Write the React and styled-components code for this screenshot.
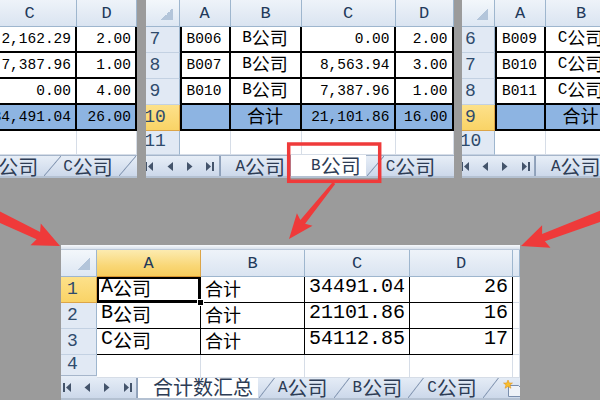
import React from "react";
import styled, { createGlobalStyle } from "styled-components";

const GlobalStyle = createGlobalStyle`
  html, body { margin: 0; padding: 0; background: #9b9b9b; }
  body { width: 600px; height: 400px; overflow: hidden; font-family: "Liberation Mono", "Noto Sans CJK SC", monospace; }
  #root { width: 600px; height: 400px; }
`;

const Stage = styled.div`
  position: relative;
  width: 600px;
  height: 400px;
  background: #9b9b9b;
  display: flex;
  flex-direction: column;
  overflow: hidden;
`;

const TopRow = styled.div`
  display: flex;
  justify-content: space-between;
  height: 178px;
  flex: none;
`;

const Panel = styled.div`
  width: ${(p) => p.$w}px;
  height: 100%;
  background: #fff;
  display: flex;
  flex-direction: column;
  overflow: hidden;
  flex: none;
`;

const BottomPanel = styled(Panel)`
  height: 155px;
  margin: 67px 0 0 61px;
`;

const TopStrip = styled.div`
  height: 5px;
  flex: none;
  background: linear-gradient(#f7f9fc, #d9e1ec);
  border-bottom: 1px solid #b9c7d9;
  box-sizing: border-box;
`;

const Grid = styled.div`
  flex: 1;
  min-height: 0;
  display: grid;
  grid-template-columns: ${(p) => p.$cols};
  grid-template-rows: ${(p) => p.$rows};
  margin-left: ${(p) => p.$shift || 0}px;
`;

const Corner = styled.div`
  background: linear-gradient(#f3f7fb, #dde7f3);
  border-right: 1px solid #9eb6ce;
  border-bottom: 1px solid #9eb6ce;
  display: flex;
  align-items: flex-end;
  justify-content: flex-end;
  padding: 0 6px 6px 0;
  box-sizing: border-box;
`;

const CornerTri = styled.div`
  width: 12px;
  height: 12px;
  background: linear-gradient(135deg, transparent 50%, #b3c5da 50%);
`;

const ColHead = styled.div`
  background: ${(p) =>
    p.$sel ? "linear-gradient(#fcebb0, #f9d777 60%, #f6cc5c)" : "linear-gradient(#eef3f9, #dae4f1)"};
  border-right: 1px solid ${(p) => (p.$sel ? "#dca548" : "#9eb6ce")};
  border-bottom: 1px solid ${(p) => (p.$sel ? "#d9962f" : "#9eb6ce")};
  color: #22395a;
  font: 17px/1 "Liberation Mono", monospace;
  display: flex;
  align-items: center;
  justify-content: center;
  box-sizing: border-box;
`;

const RowHead = styled.div`
  background: ${(p) => (p.$sel ? "linear-gradient(#fde18a, #f9d366)" : "#e1e9f4")};
  border-right: 1px solid ${(p) => (p.$sel ? "#dca548" : "#9eb6ce")};
  border-bottom: 1px solid ${(p) => (p.$sel ? "#dca548" : "#c3d1e2")};
  color: #2f4b6c;
  font: 18px/1 "Liberation Mono", monospace;
  display: flex;
  align-items: flex-end;
  justify-content: center;
  padding-bottom: 4px;
  box-sizing: border-box;
`;

const Cell = styled.div`
  position: relative;
  display: flex;
  align-items: flex-end;
  justify-content: ${(p) => (p.$al === "r" ? "flex-end" : p.$al === "c" ? "center" : "flex-start")};
  padding: 0 ${(p) => (p.$al === "r" ? 4 : 0)}px 5px ${(p) => (p.$al === "l" ? 4 : 0)}px;
  background: ${(p) => (p.$fill ? "#8db4e2" : "#fff")};
  border-right: ${(p) => (p.$ink ? p.$bw : 1)}px solid ${(p) => (p.$ink ? "#000" : "#d6dde7")};
  border-bottom: ${(p) => (p.$ink ? p.$bw : 1)}px solid ${(p) => (p.$ink ? "#000" : "#d6dde7")};
  box-shadow: ${(p) => (p.$active ? "inset 0 0 0 2px #000" : p.$lb ? `inset ${p.$bw}px 0 0 #000` : "none")};
  font: ${(p) => p.$fs}px/1 "Liberation Mono", monospace;
  color: #000;
  white-space: nowrap;
  box-sizing: border-box;
`;

const Handle = styled.div`
  position: absolute;
  right: -4px;
  bottom: -4px;
  width: 5px;
  height: 5px;
  background: #000;
  border: 1px solid #fff;
  z-index: 2;
`;

const Han = styled.span`
  font-family: "Noto Sans CJK SC", sans-serif;
  font-size: ${(p) => p.$size}px;
  line-height: 1;
`;

const Lat = styled.span`
  font-family: "Liberation Mono", monospace;
  font-size: ${(p) => p.$size}px;
  line-height: 1;
`;

const TabBar = styled.div`
  height: ${(p) => p.$h}px;
  flex: none;
  display: flex;
  align-items: stretch;
  margin-left: ${(p) => p.$shift || 0}px;
  background: linear-gradient(#e7eef7, #ccd8ea);
  border-top: 1px solid #a6b6cb;
  border-bottom: 2px solid #b4c1d2;
  box-sizing: border-box;
  white-space: nowrap;
`;

const Nav = styled.div`
  flex: none;
  width: 88px;
  padding-left: 8px;
  box-sizing: border-box;
  display: grid;
  grid-template-columns: repeat(4, 20px);
  align-items: center;
  justify-items: center;
  border-right: 1px solid #93a5bd;
  color: #44546b;
`;

const SLANT =
  "linear-gradient(to bottom right, transparent calc(50% - 0.9px), #8194b0 50%, transparent calc(50% + 0.9px))";

const Tab = styled.div`
  flex: none;
  display: flex;
  align-items: center;
  padding: 1px 5px 0 ${(p) => (p.$first ? 15 : 20)}px;
  margin-top: ${(p) => (p.$active ? -1 : 0)}px;
  background-color: ${(p) => (p.$active ? "#fff" : "transparent")};
  background-image: ${(p) => (p.$first || p.$active ? "none" : SLANT)};
  background-size: 17px 100%;
  background-repeat: no-repeat;
  background-position: 1px 0;
  border-left: ${(p) => (p.$first || p.$active ? "1px solid #8ea0ba" : "none")};
  color: #2d3c55;
  font: 16px/1 "Liberation Mono", monospace;
`;

const Overlay = styled.svg`
  position: absolute;
  left: 0;
  top: 0;
  width: 600px;
  height: 400px;
  pointer-events: none;
`;

const HAN_RE = /([\u3400-\u9fff]+)/;

function Mixed({ text, han, lat }) {
  return text
    .split(HAN_RE)
    .filter(Boolean)
    .map((part, i) =>
      HAN_RE.test(part) ? (
        <Han key={i} $size={han}>
          {part}
        </Han>
      ) : (
        <Lat key={i} $size={lat}>
          {part}
        </Lat>
      )
    );
}

const NavIcons = () => (
  <>
    <svg width="9" height="9" viewBox="0 0 9 9">
      <rect x="0" y="0" width="2" height="9" fill="currentColor" />
      <polygon points="8,0 3,4.5 8,9" fill="currentColor" />
    </svg>
    <svg width="6" height="9" viewBox="0 0 6 9">
      <polygon points="6,0 0.5,4.5 6,9" fill="currentColor" />
    </svg>
    <svg width="6" height="9" viewBox="0 0 6 9">
      <polygon points="0,0 5.5,4.5 0,9" fill="currentColor" />
    </svg>
    <svg width="9" height="9" viewBox="0 0 9 9">
      <polygon points="1,0 6,4.5 1,9" fill="currentColor" />
      <rect x="7" y="0" width="2" height="9" fill="currentColor" />
    </svg>
  </>
);

const InsertIcon = () => (
  <svg width="22" height="18" viewBox="0 0 22 18">
    <path d="M6.5 6.5h10l3 3v8h-13z" fill="#eef2f8" stroke="#7b8fad" />
    <polygon
      points="6,1 7.3,4 10.5,4 8,6 9,9.3 6,7.4 3,9.3 4,6 1.5,4 4.7,4"
      fill="#f7be2e"
      stroke="#e08a10"
      strokeWidth="0.5"
    />
  </svg>
);

function arrowPts(tx, ty, hx, hy, tw, sw, hl, hw) {
  const dx = hx - tx;
  const dy = hy - ty;
  const len = Math.hypot(dx, dy);
  const ux = dx / len;
  const uy = dy / len;
  const nx = -uy;
  const ny = ux;
  const bx = hx - ux * hl;
  const by = hy - uy * hl;
  const pts = [
    [tx + (nx * tw) / 2, ty + (ny * tw) / 2],
    [bx + (nx * sw) / 2, by + (ny * sw) / 2],
    [bx + (nx * hw) / 2 - ux * 3, by + (ny * hw) / 2 - uy * 3],
    [hx, hy],
    [bx - (nx * hw) / 2 - ux * 3, by - (ny * hw) / 2 - uy * 3],
    [bx - (nx * sw) / 2, by - (ny * sw) / 2],
    [tx - (nx * tw) / 2, ty - (ny * tw) / 2],
  ];
  return pts.map((p) => p.map((v) => v.toFixed(1)).join(",")).join(" ");
}

/* ---------- data ---------- */

const p1Rows = [
  ["2,162.29", "2.00"],
  ["7,387.96", "1.00"],
  ["0.00", "4.00"],
];
const p1Total = ["34,491.04", "26.00"];

const p2Rows = [
  ["7", "B006", "B公司", "0.00", "2.00"],
  ["8", "B007", "B公司", "8,563.94", "3.00"],
  ["9", "B010", "B公司", "7,387.96", "1.00"],
];
const p2Total = ["10", "", "合计", "21,101.86", "16.00"];

const p3Rows = [
  ["6", "B009", "C公司"],
  ["7", "B010", "C公司"],
  ["8", "B011", "C公司"],
];

const sumRows = [
  ["1", "A公司", "合计", "34491.04", "26"],
  ["2", "B公司", "合计", "21101.86", "16"],
  ["3", "C公司", "合计", "54112.85", "17"],
];

const TOP_FS = 14.5;
const TOP_HAN = 18;
const TOP_LAT = 16;
const TAB_HAN = 20;
const TAB_LAT = 16;

const TabLabel = ({ text }) => <Mixed text={text} han={TAB_HAN} lat={TAB_LAT} />;

export default function App() {
  return (
    <>
      <GlobalStyle />
      <Stage>
        <TopRow>
          {/* Panel 1: A公司 sheet (cropped) */}
          <Panel $w={137}>
            <Grid $shift={-17} $cols="94px 60px" $rows="27px repeat(4, 26px) 1fr">
              <ColHead>C</ColHead>
              <ColHead>D</ColHead>
              {p1Rows.map((r, i) => (
                <React.Fragment key={i}>
                  <Cell $al="r" $ink $bw={2} $fs={TOP_FS}>{r[0]}</Cell>
                  <Cell $al="r" $ink $bw={2} $fs={TOP_FS}>{r[1]}</Cell>
                </React.Fragment>
              ))}
              <Cell $al="r" $ink $bw={2} $fill $fs={TOP_FS}>{p1Total[0]}</Cell>
              <Cell $al="r" $ink $bw={2} $fill $fs={TOP_FS}>{p1Total[1]}</Cell>
              <Cell $fs={TOP_FS} />
              <Cell $fs={TOP_FS} />
            </Grid>
            <TabBar $h={23} $shift={-190}>
              <Nav>
                <NavIcons />
              </Nav>
              <Tab $first $active>
                <TabLabel text="A公司" />
              </Tab>
              <Tab>
                <TabLabel text="B公司" />
              </Tab>
              <Tab>
                <TabLabel text="C公司" />
              </Tab>
              <Tab>
                <InsertIcon />
              </Tab>
            </TabBar>
          </Panel>

          {/* Panel 2: B公司 sheet */}
          <Panel $w={308}>
            <Grid $shift={-14} $cols="48px 51px 71px 94px 58px" $rows="27px repeat(4, 26px) 1fr">
              <Corner>
                <CornerTri />
              </Corner>
              <ColHead>A</ColHead>
              <ColHead>B</ColHead>
              <ColHead>C</ColHead>
              <ColHead>D</ColHead>
              {p2Rows.map((r) => (
                <React.Fragment key={r[0]}>
                  <RowHead>{r[0]}</RowHead>
                  <Cell $al="c" $ink $bw={2} $lb $fs={TOP_FS}>{r[1]}</Cell>
                  <Cell $al="c" $ink $bw={2} $fs={TOP_FS}>
                    <Mixed text={r[2]} han={TOP_HAN} lat={TOP_LAT} />
                  </Cell>
                  <Cell $al="r" $ink $bw={2} $fs={TOP_FS}>{r[3]}</Cell>
                  <Cell $al="r" $ink $bw={2} $fs={TOP_FS}>{r[4]}</Cell>
                </React.Fragment>
              ))}
              <RowHead $sel>{p2Total[0]}</RowHead>
              <Cell $al="c" $ink $bw={2} $lb $fill $fs={TOP_FS} />
              <Cell $al="c" $ink $bw={2} $fill $fs={TOP_FS}>
                <Mixed text={p2Total[2]} han={TOP_HAN} lat={TOP_LAT} />
              </Cell>
              <Cell $al="r" $ink $bw={2} $fill $fs={TOP_FS}>{p2Total[3]}</Cell>
              <Cell $al="r" $ink $bw={2} $fill $fs={TOP_FS}>{p2Total[4]}</Cell>
              <RowHead>11</RowHead>
              <Cell $fs={TOP_FS} />
              <Cell $fs={TOP_FS} />
              <Cell $fs={TOP_FS} />
              <Cell $fs={TOP_FS} />
            </Grid>
            <TabBar $h={23} $shift={-14}>
              <Nav>
                <NavIcons />
              </Nav>
              <Tab $first>
                <TabLabel text="A公司" />
              </Tab>
              <Tab $active>
                <TabLabel text="B公司" />
              </Tab>
              <Tab>
                <TabLabel text="C公司" />
              </Tab>
            </TabBar>
          </Panel>

          {/* Panel 3: C公司 sheet */}
          <Panel $w={138}>
            <Grid $shift={-15} $cols="48px 51px 71px" $rows="27px repeat(4, 26px) 1fr">
              <Corner>
                <CornerTri />
              </Corner>
              <ColHead>A</ColHead>
              <ColHead>B</ColHead>
              {p3Rows.map((r) => (
                <React.Fragment key={r[0]}>
                  <RowHead>{r[0]}</RowHead>
                  <Cell $al="c" $ink $bw={2} $lb $fs={TOP_FS}>{r[1]}</Cell>
                  <Cell $al="c" $ink $bw={2} $fs={TOP_FS}>
                    <Mixed text={r[2]} han={TOP_HAN} lat={TOP_LAT} />
                  </Cell>
                </React.Fragment>
              ))}
              <RowHead $sel>9</RowHead>
              <Cell $ink $bw={2} $lb $fill $fs={TOP_FS} />
              <Cell $al="c" $ink $bw={2} $fill $fs={TOP_FS}>
                <Mixed text="合计" han={TOP_HAN} lat={TOP_LAT} />
              </Cell>
              <RowHead>10</RowHead>
              <Cell $fs={TOP_FS} />
              <Cell $fs={TOP_FS} />
            </Grid>
            <TabBar $h={23} $shift={-15}>
              <Nav>
                <NavIcons />
              </Nav>
              <Tab $first>
                <TabLabel text="A公司" />
              </Tab>
              <Tab>
                <TabLabel text="B公司" />
              </Tab>
            </TabBar>
          </Panel>
        </TopRow>

        {/* Summary sheet */}
        <BottomPanel $w={459}>
          <TopStrip />
          <Grid $shift={-12} $cols="48px 104px 104px 105px 103px 1fr" $rows="27px 26px 26px 26px 1fr">
            <Corner>
              <CornerTri />
            </Corner>
            <ColHead $sel>A</ColHead>
            <ColHead>B</ColHead>
            <ColHead>C</ColHead>
            <ColHead>D</ColHead>
            <ColHead />
            {sumRows.map((r, i) => (
              <React.Fragment key={r[0]}>
                <RowHead $sel={i === 0}>{r[0]}</RowHead>
                <Cell $al="l" $ink $bw={1} $active={i === 0} $fs={20}>
                  <Mixed text={r[1]} han={19} lat={20} />
                  {i === 0 && <Handle />}
                </Cell>
                <Cell $al="l" $ink $bw={1} $fs={20}>
                  <Mixed text={r[2]} han={18} lat={20} />
                </Cell>
                <Cell $al="r" $ink $bw={1} $fs={20}>{r[3]}</Cell>
                <Cell $al="r" $ink $bw={1} $fs={20}>{r[4]}</Cell>
                <Cell $fs={20} />
              </React.Fragment>
            ))}
            <RowHead>4</RowHead>
            <Cell $fs={20} />
            <Cell $fs={20} />
            <Cell $fs={20} />
            <Cell $fs={20} />
            <Cell $fs={20} />
          </Grid>
          <TabBar $h={25} $shift={-12}>
            <Nav>
              <NavIcons />
            </Nav>
            <Tab $first $active>
              <TabLabel text="合计数汇总" />
            </Tab>
            <Tab>
              <TabLabel text="A公司" />
            </Tab>
            <Tab>
              <TabLabel text="B公司" />
            </Tab>
            <Tab>
              <TabLabel text="C公司" />
            </Tab>
            <Tab>
              <InsertIcon />
            </Tab>
          </TabBar>
        </BottomPanel>

        <Overlay viewBox="0 0 600 400">
          <rect x="288.7" y="144" width="91" height="37.3" fill="none" stroke="#ef3a3a" strokeWidth="3.5" />
          <polygon points={arrowPts(-12, 211.5, 60, 246, 11, 8, 24, 24)} fill="#ef3a3a" />
          <polygon points={arrowPts(612, 212, 521, 246, 11, 8, 24, 24)} fill="#ef3a3a" />
          <polygon points={arrowPts(334, 183, 289, 239, 3, 6, 22, 20)} fill="#ef3a3a" />
        </Overlay>
      </Stage>
    </>
  );
}
